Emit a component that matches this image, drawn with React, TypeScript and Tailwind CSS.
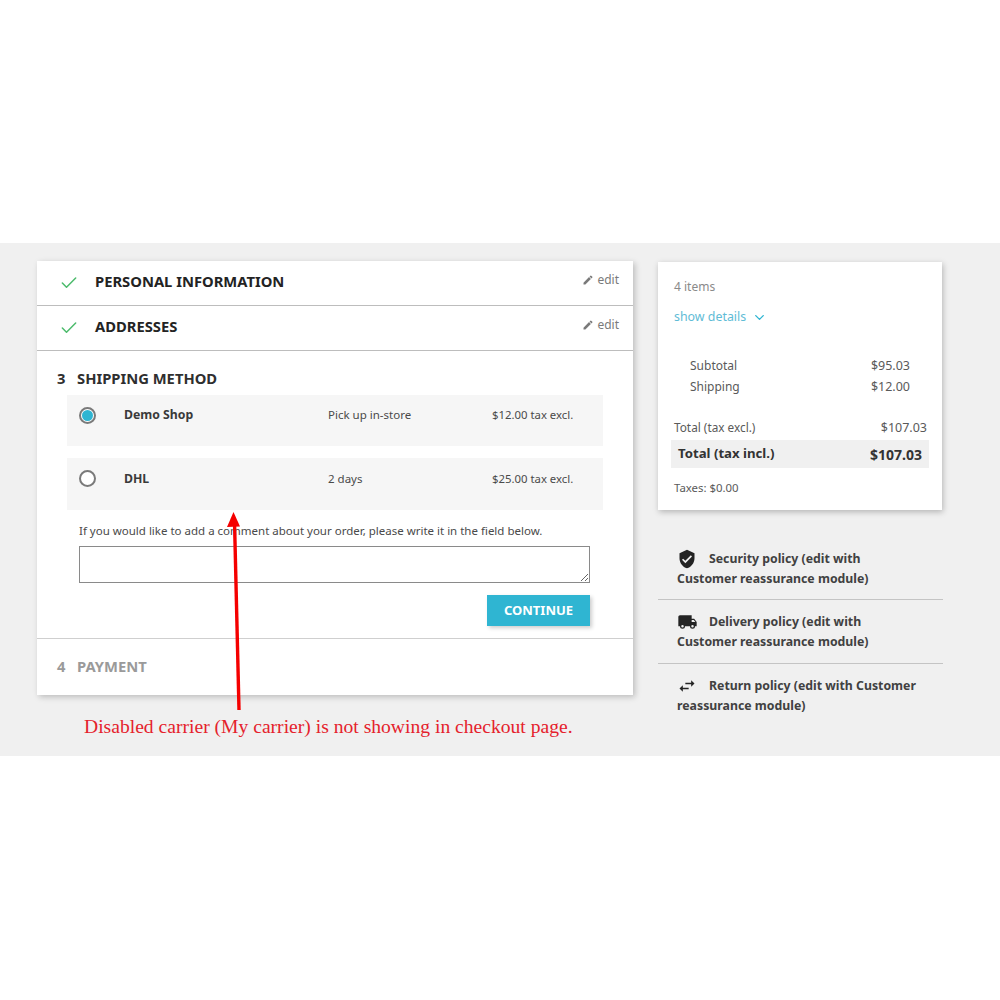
import React from "react";
import { Check, ChevronDown } from "lucide-react";

const Pencil = () => (
  <svg width="12" height="12" viewBox="0 0 24 24" className="text-[#7a7a7a]" fill="currentColor">
    <path d="M3 17.25V21h3.75L17.81 9.94l-3.75-3.75L3 17.25zM20.71 7.04a1 1 0 0 0 0-1.41l-2.34-2.34a1 1 0 0 0-1.41 0l-1.83 1.83 3.75 3.75 1.83-1.83z" />
  </svg>
);

function DoneRow({ title }: { title: string }) {
  return (
    <div className="h-[45px] border-b border-[#bdbdbd] flex items-start pl-[22px] pr-[14px]">
      <Check className="w-[20px] h-[20px] mt-[12px] text-[#4cbb6c]" strokeWidth={1.8} />
      <div className="ml-[16px] mt-[8px] text-[14.75px] leading-[24px] font-bold text-[#232323]">{title}</div>
      <div className="ml-auto mt-[9px] flex items-center gap-[3px] text-[12px] leading-[20px] text-[#7a7a7a]">
        <Pencil />
        <span>edit</span>
      </div>
    </div>
  );
}

function Carrier({ name, delay, price, selected, last }: { name: string; delay: string; price: string; selected?: boolean; last?: boolean }) {
  const textTop = last ? "mt-[12px]" : "mt-[11px]";
  return (
    <div className={`bg-[#f6f6f6] flex items-start pl-[12px] ${last ? "h-[52px]" : "h-[51px] mb-[12px]"}`}>
      <div className="mt-[12px] w-[17px] h-[17px] rounded-full border-2 border-[#7a7a7a] bg-white flex items-center justify-center">
        {selected && <div className="w-[11px] h-[11px] rounded-full bg-[#2fb5d2]" />}
      </div>
      <div className={`ml-[28px] w-[204px] text-[12.25px] leading-[18px] font-bold text-[#3a3a3a] ${textTop}`}>{name}</div>
      <div className={`w-[164px] text-[11.5px] leading-[18px] text-[#4a4a4a] ${textTop}`}>{delay}</div>
      <div className={`text-[11.35px] leading-[18px] text-[#4a4a4a] ${textTop}`}>{price}</div>
    </div>
  );
}

function SummaryLine({ label, value, inset }: { label: string; value: string; inset?: boolean }) {
  return (
    <div className={`flex justify-between leading-[21px] text-[#5a5a5a] ${inset ? "pl-[16px] pr-[17px] text-[12px]" : "text-[11.8px]"}`}>
      <span>{label}</span>
      <span className="text-[12.5px]">{value}</span>
    </div>
  );
}

function Policy({ icon, children, last, first }: { icon: React.ReactNode; children: React.ReactNode; last?: boolean; first?: boolean }) {
  return (
    <div className={`h-[64px] pl-[19px] pr-[23px] text-[12.3px] leading-[20px] font-bold text-[#414141] ${first ? "pt-[13px]" : "pt-[12px]"} ${last ? "" : "border-b border-[#c4c4c4]"}`}>
      <span className="inline-block w-[32px] h-[18px] align-top">{icon}</span>
      {children}
    </div>
  );
}

export default function App() {
  return (
    <div className="min-h-[1000px] bg-white pt-[243px] font-['Noto_Sans','Open_Sans',sans-serif]">
      <div className="relative h-[513px] bg-[#f0f0f0] pl-[37px] pt-[18px] flex items-start">
        <div className="w-[596px] shrink-0">
          <div className="bg-white shadow-[2px_2px_6px_rgba(0,0,0,0.22)]">
            <DoneRow title="PERSONAL INFORMATION" />
            <DoneRow title="ADDRESSES" />
            <div className="h-[288px] border-b border-[#cfcfcf] pt-[16px]">
              <div className="pl-[20px] text-[14.75px] leading-[22px] font-bold text-[#2f2f2f] flex">
                <span className="w-[20px]">3</span>
                <span>SHIPPING METHOD</span>
              </div>
              <div className="mx-[30px] mt-[6px]">
                <Carrier name="Demo Shop" delay="Pick up in-store" price="$12.00 tax excl." selected />
                <Carrier name="DHL" delay="2 days" price="$25.00 tax excl." last />
              </div>
              <div className="ml-[42px] mr-[43px] mt-[12px]">
                <div className="text-[11.5px] leading-[18px] text-[#4a4a4a]">
                  If you would like to add a comment about your order, please write it in the field below.
                </div>
                <textarea className="block mt-[6px] w-full h-[37px] border border-[#8a8a8a] bg-white" />
                <div className="flex justify-end mt-[12px]">
                  <button className="w-[103px] h-[31px] bg-[#2fb5d2] text-white text-[13px] font-bold shadow-[2px_2px_4px_rgba(0,0,0,0.2)]">
                    CONTINUE
                  </button>
                </div>
              </div>
            </div>
            <div className="h-[56px] pl-[20px] pt-[16px] flex text-[14.75px] leading-[22px] font-bold text-[#9a9a9a]">
              <span className="w-[20px]">4</span>
              <span>PAYMENT</span>
            </div>
          </div>
          <div className="mt-[20px] ml-[47px] whitespace-nowrap font-['Liberation_Serif',serif] text-[19.6px] leading-[24px] text-[#e5222c]">
            Disabled carrier (My carrier) is not showing in checkout page.
          </div>
        </div>

        <div className="ml-[25px] w-[285px] shrink-0">
          <div className="w-[284px] h-[248px] mt-[1px] bg-white shadow-[1px_2px_6px_rgba(0,0,0,0.25)] px-[13px] pt-[15px]">
            <div className="pl-[3px] text-[12px] leading-[20px] text-[#8a8a8a]">4 items</div>
            <div className="pl-[3px] mt-[10px] flex items-center text-[12.4px] leading-[20px] text-[#5fbcd6]">
              <span>show details</span>
              <ChevronDown className="w-[15px] h-[15px] ml-[6px] text-[#2fb5d2]" strokeWidth={2.2} />
            </div>
            <div className="mt-[28px] pr-[2px] pl-[3px]">
              <SummaryLine label="Subtotal" value="$95.03" inset />
              <SummaryLine label="Shipping" value="$12.00" inset />
            </div>
            <div className="mt-[20px] pl-[3px] pr-[2px]">
              <SummaryLine label="Total (tax excl.)" value="$107.03" />
            </div>
            <div className="h-[28px] mt-[2px] bg-[#f0f0f0] px-[7px] flex items-center justify-between font-bold text-[#333]">
              <span className="text-[13.2px]">Total (tax incl.)</span>
              <span className="text-[14px]">$107.03</span>
            </div>
            <div className="mt-[10px] pl-[3px] text-[11.4px] leading-[20px] text-[#5a5a5a]">Taxes: $0.00</div>
          </div>

          <div className="mt-[26px]">
            <Policy
              first
              icon={
                <svg width="20" height="20" viewBox="0 0 24 24" fill="#232323">
                  <path d="M12 1 3 5v6c0 5.5 3.8 10.7 9 12 5.200-1.300 9-6.500 9-12V5l-9-4zm-2 16-4-4 1.400-1.400L10 14.200l6.600-6.600L18 9l-8 8z" />
                </svg>
              }
            >
              Security policy (edit with Customer reassurance module)
            </Policy>
            <Policy
              icon={
                <svg width="21" height="20" viewBox="0 0 24 24" fill="#232323">
                  <path d="M20 8h-3V4H3c-1.100 0-2 .9-2 2v11h2a3 3 0 0 0 6 0h6a3 3 0 0 0 6 0h2v-5l-3-4zM6 18.500a1.500 1.500 0 1 1 0-3 1.500 1.500 0 0 1 0 3zm12 0a1.500 1.500 0 1 1 0-3 1.500 1.500 0 0 1 0 3zM17 12V9.500h2.500l2 2.500H17z" />
                </svg>
              }
            >
              Delivery policy (edit with Customer reassurance module)
            </Policy>
            <Policy
              last
              icon={
                <svg width="20" height="20" viewBox="0 0 24 24" fill="#232323">
                  <path d="M6.990 11 3 15l3.990 4v-3H14v-2H6.990v-3zM21 9l-3.990-4v3H10v2h7.010v3L21 9z" />
                </svg>
              }
            >
              Return policy (edit with Customer reassurance module)
            </Policy>
          </div>
        </div>

        <svg className="absolute left-0 top-0 pointer-events-none" width="300" height="500">
          <path d="M239 467 234.500 278" stroke="#f50000" strokeWidth="3.400" fill="none" />
          <path d="M233.500 269 227 284 240 283.500Z" fill="#f50000" />
        </svg>
      </div>
    </div>
  );
}
